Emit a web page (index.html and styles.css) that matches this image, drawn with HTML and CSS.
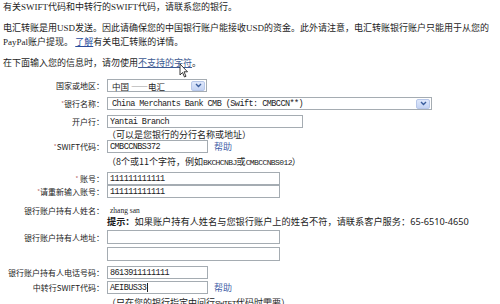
FILE: index.html
```html
<!DOCTYPE html>
<html lang="zh-CN">
<head>
  <meta charset="UTF-8" />
  <title>电汇转账银行账户</title>
  <link rel="stylesheet" href="styles.css">
</head>
<body>

  <!-- 说明文字 -->
  <p class="intro">有关SWIFT代码和中转行的SWIFT代码，请联系您的银行。</p>
  <p class="intro">电汇转账是用USD发送。因此请确保您的中国银行账户能接收USD的资金。此外请注意，电汇转账银行账户只能用于从您的<br>PayPal账户提现。 <a class="link" href="#">了解</a>有关电汇转账的详情。</p>
  <p class="intro">在下面输入您的信息时，请勿使用<a class="link soft" href="#">不支持的字符</a>。</p>

  <!-- 银行信息表单 -->
  <form class="bank-form">
    <div class="row first">
      <span class="label">国家或地区：</span>
      <div class="select w-country"><span class="value">中国 ——电汇</span><span class="arrow"><svg width="7" height="5" viewBox="0 0 7 5"><path d="M1 1 L3.5 3.5 L6 1" fill="none" stroke="#3a5d9c" stroke-width="1.4"/></svg></span></div>
    </div>
    <div class="row">
      <span class="label"><i class="req">*</i>银行名称：</span>
      <div class="select w-bank"><span class="value mono">China Merchants Bank CMB (Swift: CMBCCN**)</span><span class="arrow"><svg width="7" height="5" viewBox="0 0 7 5"><path d="M1 1 L3.5 3.5 L6 1" fill="none" stroke="#3a5d9c" stroke-width="1.4"/></svg></span></div>
    </div>
    <div class="row">
      <span class="label">开户行：</span>
      <input class="field w-branch" type="text" value="Yantai Branch">
    </div>
    <div class="hint mt2">（可以是您银行的分行名称或地址）</div>
    <div class="row mt1">
      <span class="label"><i class="req">*</i>SWIFT代码：</span>
      <input class="field w-short" type="text" value="CMBCCNBS372">
      <a class="help" href="#">帮助</a>
    </div>
    <div class="hint mt4">（8个或11个字符，例如<span class="latin">BKCHCNBJ</span>或<span class="latin">CMBCCNBS012</span>）</div>
    <div class="row mt6">
      <span class="label"><i class="req">*</i> 账号：</span>
      <input class="field w-acct" type="text" value="111111111111">
    </div>
    <div class="row mt0">
      <span class="label"><i class="req">*</i>请重新输入账号：</span>
      <input class="field w-acct" type="text" value="111111111111">
    </div>
    <div class="row text-row mt6">
      <span class="label">银行账户持有人姓名：</span>
      <span class="plain">zhang san</span>
    </div>
    <div class="tip"><b>提示：</b>如果账户持有人姓名与您银行账户上的姓名不符，请联系客户服务：65-6510-4650</div>
    <div class="row tall mt2">
      <span class="label">银行账户持有人地址：</span>
      <input class="field w-acct" type="text" value="">
    </div>
    <div class="row tall mt3">
      <span class="label"></span>
      <input class="field w-acct" type="text" value="">
    </div>
    <div class="row">
      <span class="label">银行账户持有人电话号码：</span>
      <input class="field w-short" type="text" value="8613911111111">
    </div>
    <div class="row mt2">
      <span class="label">中转行SWIFT代码：</span>
      <div class="field w-short caret-box"><span>AEIBUS33</span><span class="caret"></span></div>
      <a class="help" href="#">帮助</a>
    </div>
    <div class="hint mt4">（只在您的银行指定中间行<span class="latin">SWIFT</span>代码时需要）</div>
  </form>

  <!-- 鼠标指针 -->
  <svg class="pointer" width="10" height="15" viewBox="0 0 10 15">
    <path d="M1 1 L1 12 L3.5 9.5 L5.5 14 L7 13.3 L5 8.8 L8.5 8.8 Z" fill="#fff" stroke="#222" stroke-width="0.9" stroke-linejoin="round"/>
  </svg>
</body>
</html>
```

FILE: styles.css
```css
:root {
  --text:#1c1c1c;
  --link:#2a4c9b;
  --border:#a5acb2;
}
* {
  box-sizing: border-box;
}
body {
  margin: 0;
  padding: 0 0 0 3px;
  font-family: "Liberation Serif", "Noto Sans CJK SC", serif;
  font-size: 9px;
  color: var(--text);
  background: #fff;
  overflow: hidden;
}

/* 说明段落 */
.intro {
  margin: 7px 0 0;
  line-height: 14px;
  white-space: nowrap;
}
.intro:first-child {
  margin-top: 0;
}
.link {
  color: var(--link);
  text-decoration: underline;
}
.link.soft {
  color: #3d5a92;
}

/* 表单 */
.bank-form {
  margin: 0;
}
.row {
  display: flex;
  align-items: center;
  height: 13px;
  margin-top: 5px;
}
.row.first { margin-top: 9px; }
.row.tall { height: 14px; }
.row.text-row { height: 12px; }
.mt0 { margin-top: 0; }
.mt1 { margin-top: 1px; }
.mt2 { margin-top: 2px; }
.mt3 { margin-top: 3px; }
.mt4 { margin-top: 4px; }
.mt6 { margin-top: 6px; }

.label {
  flex: 0 0 101px;
  text-align: right;
  font-family: "Noto Sans CJK SC", sans-serif;
  font-size: 8px;
  color: #222;
  white-space: nowrap;
  margin-right: 3px;
}
.req {
  font-style: normal;
  color: #b96a6a;
  font-size: 6px;
  vertical-align: 1px;
}

.field {
  height: 100%;
  border: 1px solid var(--border);
  background: #fff;
  padding: 0 2px;
  margin: 0;
  font-family: "Liberation Mono", monospace;
  font-size: 8.5px;
  letter-spacing: -0.55px;
  color: #222;
  outline: none;
}
.w-branch { width: 196px; }
.w-short { width: 101px; }
.w-acct { width: 173px; }

.caret-box {
  display: flex;
  align-items: center;
}
.caret {
  width: 1px;
  height: 9px;
  margin-left: 1px;
  background: #222;
}

/* 下拉框（XP 风格） */
.select {
  height: 100%;
  display: flex;
  align-items: center;
  justify-content: space-between;
  border: 1px solid var(--border);
  background: #fff;
  padding: 0 1px 0 4px;
}
.w-country { width: 100px; }
.w-bank { width: 325px; }
.select .value {
  font-family: "Noto Sans CJK SC", sans-serif;
  font-size: 8.5px;
  white-space: nowrap;
}
.select .value.mono {
  font-family: "Liberation Mono", monospace;
  font-size: 8.5px;
  letter-spacing: -0.55px;
}
.arrow {
  width: 14px;
  height: 10px;
  display: flex;
  align-items: center;
  justify-content: center;
  background: linear-gradient(#dfe8fb, #c4d3f3);
  border: 1px solid #b7c7e9;
  border-radius: 2px;
}

.help {
  margin-left: 6px;
  font-family: "Noto Sans CJK SC", sans-serif;
  font-size: 9px;
  color: #3f5fa8;
  text-decoration: none;
}

.hint {
  margin-left: 104px;
  height: 9px;
  line-height: 9px;
  font-family: "Noto Sans CJK SC", sans-serif;
  font-size: 9px;
  white-space: nowrap;
}
.latin {
  font-family: "Liberation Mono", monospace;
  font-size: 8px;
  letter-spacing: -0.6px;
}
.plain {
  font-size: 7.5px;
  padding-left: 3px;
}
.tip {
  margin-left: 104px;
  height: 12px;
  line-height: 12px;
  font-family: "Noto Sans", "Noto Sans CJK SC", sans-serif;
  font-size: 9.2px;
  white-space: nowrap;
}

/* 鼠标指针 */
.pointer {
  position: absolute;
  left: 179px;
  top: 63px;
}
```
